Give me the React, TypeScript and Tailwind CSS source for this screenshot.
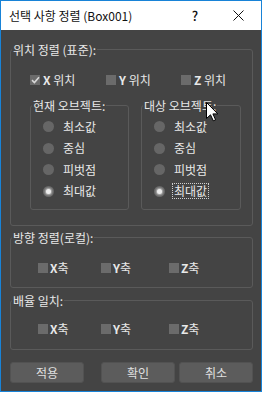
import type { ReactNode } from 'react'

const font = "font-['Noto_Sans_CJK_KR','Noto_Sans',sans-serif]"

const Group = ({ label, className, children }: { label: string; className: string; children?: ReactNode }) => (
  <div className={`relative rounded-[3px] border border-[#5a5a5a] ${className}`}>
    <span className="absolute left-[1px] top-[-9px] bg-[#444444] px-[1px] text-[12px] leading-[18px] text-[#e8e8e8]">
      {label}
    </span>
    {children}
  </div>
)

const Check = ({ checked = false }: { checked?: boolean }) => (
  <span className="flex h-[10px] w-[10px] shrink-0 items-center justify-center bg-[#6b6b6b]">
    {checked && (
      <svg width="9" height="8" viewBox="0 0 9 8">
        <path d="M1 4.2 L3.4 6.5 L8 1.2" fill="none" stroke="#d8d8d8" strokeWidth="1.6" />
      </svg>
    )}
  </span>
)

const Radio = ({ label, selected = false, focused = false }: { label: string; selected?: boolean; focused?: boolean }) => (
  <div className="flex h-[21.5px] items-center gap-[7px]">
    <span className="flex h-[11px] w-[11px] shrink-0 items-center justify-center rounded-full bg-[#666666]">
      {selected && <span className="h-[5px] w-[5px] rounded-full bg-[#ececec] shadow-[0_0_2px_1px_#bdbdbd]" />}
    </span>
    <span
      className={`text-[12px] leading-[14px] text-[#e8e8e8] ${focused ? 'border border-dotted border-[#cfcfcf] px-[1px]' : 'border border-transparent px-[1px]'}`}
    >
      {label}
    </span>
  </div>
)

const Sub = ({ label, width }: { label: string; width: string }) => (
  <Group label={label} className={`h-[105px] ${width}`}>
    <div className="flex flex-col pl-[12px] pt-[10px]">
      <Radio label="최소값" />
      <Radio label="중심" />
      <Radio label="피벗점" />
      <Radio label="최대값" selected focused={label === '대상 오브젝트:'} />
    </div>
  </Group>
)

const AxisRow = ({ top }: { top: string }) => (
  <div className={`flex h-[14px] items-center pl-[27px] ${top}`}>
    {['X', 'Y', 'Z'].map((a, i) => (
      <div key={a} className={`flex items-center gap-[2px] ${i === 0 ? 'w-[63px]' : i === 1 ? 'w-[68px]' : ''}`}>
        <Check />
        <span className="text-[12px] leading-[14px] text-[#e8e8e8]">
          <span className="font-semibold">{a}</span>축
        </span>
      </div>
    ))}
  </div>
)

const Button = ({ label, className = '' }: { label: string; className?: string }) => (
  <button className={`h-[21px] w-[74px] rounded-[3px] border border-[#525252] bg-[#5c5c5c] text-[12px] leading-[14px] text-[#e0e0e0] ${className}`}>
    {label}
  </button>
)

export default function App() {
  return (
    <div className={`relative h-[393px] w-[262px] bg-white ${font}`}>
      <div className="flex h-[392px] w-[262px] flex-col border border-[#1883d7]">
        <div className="flex h-[29px] items-center bg-white pl-[8px]">
          <span className="flex-1 text-[12px] leading-[16px] text-[#111]">선택 사항 정렬 (Box001)</span>
          <span className="w-[28px] text-center text-[13px] font-medium leading-[16px] text-[#111]">?</span>
          <span className="ml-[7px] flex w-[45px] items-center justify-center">
            <svg width="11" height="11" viewBox="0 0 11 11">
              <path d="M0.5 0.5 L10.5 10.5 M10.5 0.5 L0.5 10.5" stroke="#111" strokeWidth="1" />
            </svg>
          </span>
        </div>

        <div className="flex flex-1 flex-col bg-[#444444] pl-[9px] pr-[8px]">
          <Group label="위치 정렬 (표준):" className="mt-[19px] h-[177px]">
            <div className="flex h-[14px] items-center pl-[19px] pt-0 mt-[23px]">
              <div className="flex w-[76px] items-center gap-[3px]">
                <Check checked />
                <span className="text-[12px] leading-[14px] text-[#e8e8e8]">
                  <span className="font-semibold">X</span> 위치
                </span>
              </div>
              <div className="flex w-[75px] items-center gap-[3px]">
                <Check />
                <span className="text-[12px] leading-[14px] text-[#e8e8e8]">
                  <span className="font-semibold">Y</span> 위치
                </span>
              </div>
              <div className="flex items-center gap-[3px]">
                <Check />
                <span className="text-[12px] leading-[14px] text-[#e8e8e8]">
                  <span className="font-semibold">Z</span> 위치
                </span>
              </div>
            </div>
            <div className="mt-[18px] flex gap-[12px] pl-[19px]">
              <Sub label="현재 오브젝트:" width="w-[99px]" />
              <Sub label="대상 오브젝트:" width="w-[100px]" />
            </div>
          </Group>

          <Group label="방향 정렬(로컬):" className="mt-[11px] h-[51px]">
            <AxisRow top="mt-[23px]" />
          </Group>

          <Group label="배율 일치:" className="mt-[12px] h-[50px]">
            <AxisRow top="mt-[21px]" />
          </Group>

          <div className="mt-[12px] flex">
            <Button label="적용" />
            <Button label="확인" className="ml-[17px]" />
            <Button label="취소" className="ml-[4px]" />
          </div>
        </div>
      </div>

      <svg className="absolute left-[206px] top-[102px]" width="13" height="20" viewBox="0 0 13 20">
        <path d="M0.5 0.5 L0.5 16.5 L4.5 12.8 L7.3 18.8 L9.6 17.8 L6.9 11.9 L11.8 11.9 Z" fill="#fff" stroke="#000" strokeWidth="1" />
      </svg>
    </div>
  )
}
